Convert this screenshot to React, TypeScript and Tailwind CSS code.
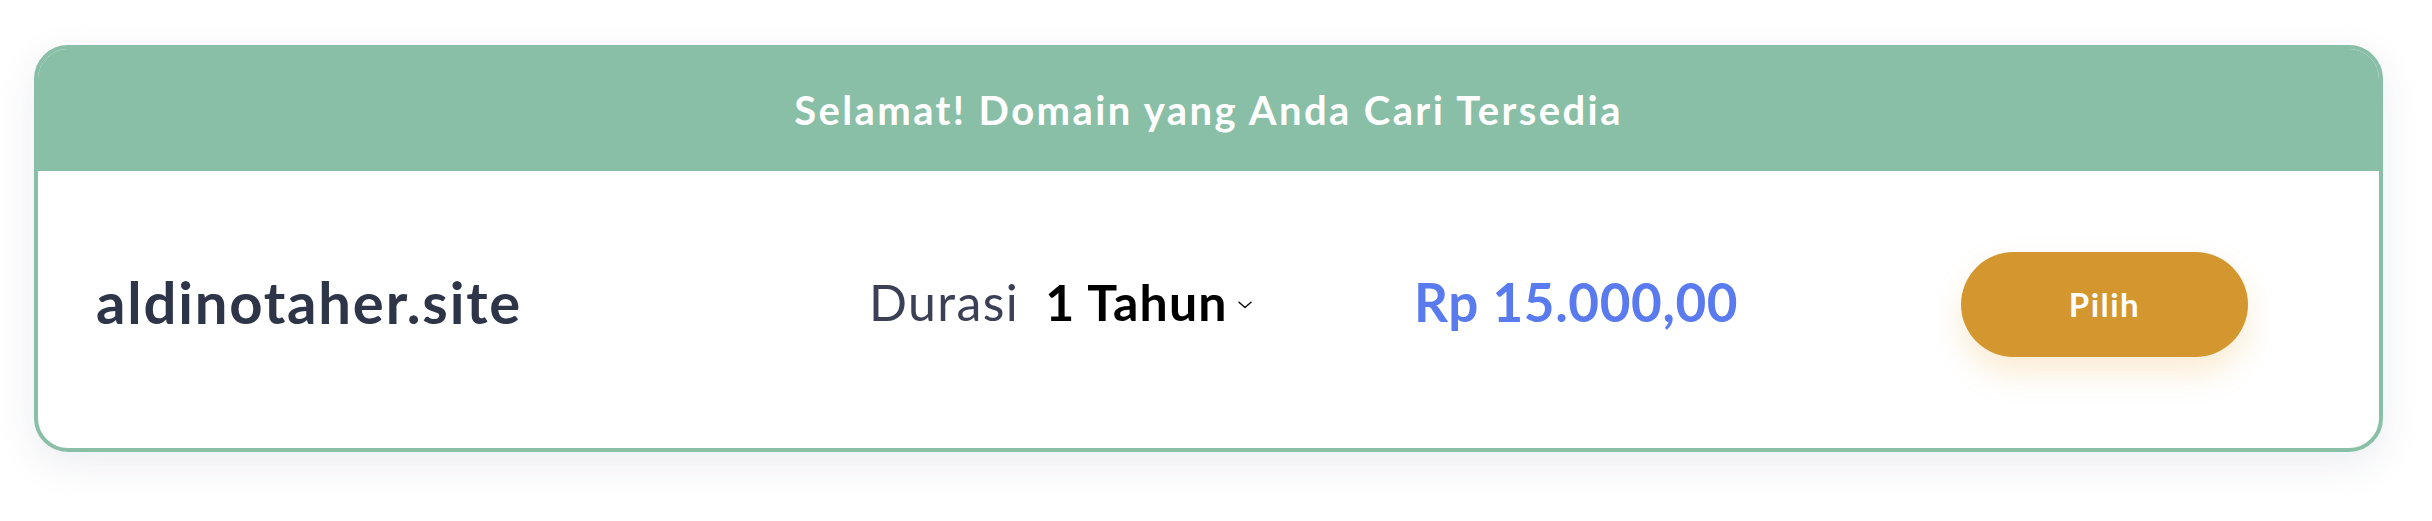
import React from "react";

export default function App() {
  return (
    <div className="w-[2432px] h-[521px] bg-white overflow-hidden" style={{ fontFamily: "Lato, 'Noto Sans', sans-serif" }}>
      <div className="pt-[45px] pl-[34px]">
        <div className="w-[2349px] h-[407px] rounded-[34px] border-4 border-[#89bea7] bg-white overflow-hidden flex flex-col shadow-[0_12px_40px_rgba(40,50,100,0.09)]">
          <div className="h-[122px] shrink-0 bg-[#89bea7] flex items-center justify-center">
            <span className="text-white font-bold text-[40px] tracking-[2.4px] leading-none">Selamat! Domain yang Anda Cari Tersedia</span>
          </div>
          <div className="flex-1 flex items-center pl-[58px] pb-[10px]">
            <div className="w-[773px] shrink-0 mb-[6px]">
              <span className="text-[#2f3549] font-bold text-[58px] tracking-[1.8px] leading-none">aldinotaher.site</span>
            </div>
            <div className="w-[545px] shrink-0 flex items-center mb-[6px]">
              <span className="text-[#3b4057] font-normal text-[50px] tracking-[1.4px] leading-none">Durasi</span>
              <span className="ml-[26px] text-black font-bold text-[50px] tracking-[1.2px] leading-none">1 Tahun</span>
              <svg className="ml-[10px] mt-[6px]" width="14" height="8" viewBox="0 0 14 8" fill="none">
                <path d="M1 1.2 L7 6.5 L13 1.2" stroke="#111" strokeWidth="1.5" strokeLinecap="round" strokeLinejoin="round" />
              </svg>
            </div>
            <div className="w-[547px] shrink-0 mb-[6px]">
              <span className="text-[#5a7bef] font-bold text-[53px] tracking-[0.6px] leading-none">Rp 15.000,00</span>
            </div>
            <button className="w-[287px] h-[105px] rounded-full bg-[#d4962e] text-white font-bold text-[33px] tracking-[1.5px] leading-none shadow-[0_16px_30px_rgba(230,170,60,0.22)]">
              Pilih
            </button>
          </div>
        </div>
      </div>
    </div>
  );
}
